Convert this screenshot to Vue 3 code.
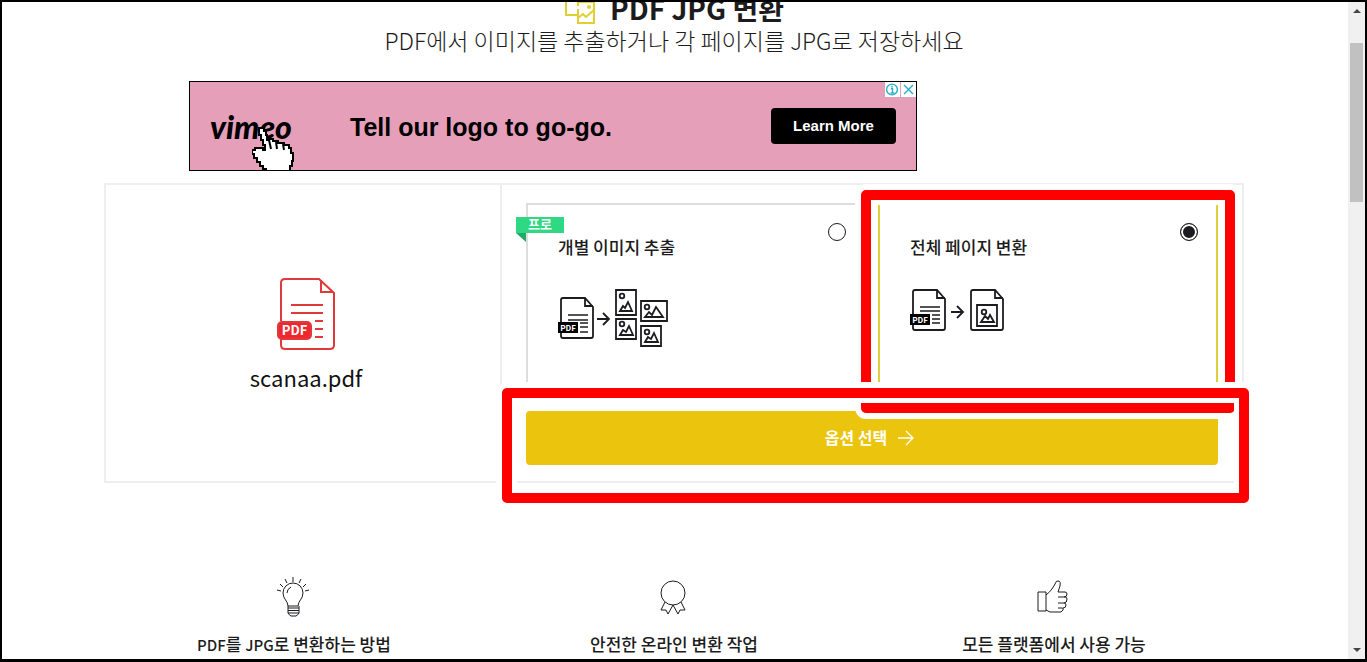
<script setup>
import { ref } from 'vue'

const mode = ref('pages')

const rays = [
  'M16 0v5',
  'M8 2l2 4',
  'M24 2l-2 4',
  'M3 7l3 3',
  'M29 7l-3 3',
  'M0 13l4 1',
  'M32 13l-4 1',
]
</script>

<template>
  <div class="window">
    <main class="page">
      <header class="intro">
        <h1>
          <svg class="title-icon" width="32" height="32" viewBox="0 0 32 32" aria-hidden="true">
            <path d="M14 23H2V3h27v7" />
            <path d="M14 14V10h16v21H14v-8M14 17v6M14 26l5-4 3 3 8-7" />
            <circle cx="25" cy="15" r="2" class="dot" />
          </svg>
          <span>PDF JPG 변환</span>
        </h1>
        <p>PDF에서 이미지를 추출하거나 각 페이지를 JPG로 저장하세요</p>
      </header>

      <div class="content">
        <aside class="ad">
          <div class="brand">vimeo</div>
          <svg class="hand" width="44" height="44" viewBox="0 0 44 44" aria-hidden="true">
            <path
              d="M7 2h5v3h2v4h1v5h2v-1h4v2h5v2h6v2h5v3h2v5h2v8h-1v5h-2v6H14v-3h-3v-3H8v-4H5v-4H2v-4H0v-4h3v-2h8v2h2v-5h-2v-5H9V9H7z"
            />
            <path class="hand-line" d="M17 14l2 9M24 16l1 7M31 18l1 6" />
          </svg>
          <strong class="slogan">Tell our logo to go-go.</strong>
          <a class="learn" href="#">Learn More</a>
          <div class="ad-controls">
            <button type="button" aria-label="Ad information">
              <svg width="15" height="15" viewBox="0 0 15 15">
                <circle cx="7" cy="7.5" r="5.4" />
                <path d="M6 6.5h1.500V11M5.500 11h4M7 3.700v1.500" />
              </svg>
            </button>
            <button type="button" aria-label="Close ad">
              <svg width="15" height="15" viewBox="0 0 15 15">
                <path d="M3 3l9 9M12 3l-9 9" />
              </svg>
            </button>
          </div>
        </aside>

        <section class="tool">
          <div class="file">
            <svg width="60" height="74" viewBox="0 0 60 74" aria-hidden="true" class="pdf-icon">
              <path d="M5 44V6q0-4 4-4h34l15 14v52q0 4-4 4H9q-4 0-4-4v-8" />
              <path d="M45 3v12h12" />
              <path d="M15 28h32M15 36h32M39 44h8M39 52h8M39 60h8" />
              <rect x="2" y="45" width="33" height="17" rx="4" />
              <text x="18.500" y="58" text-anchor="middle">PDF</text>
            </svg>
            <span>scanaa.pdf</span>
          </div>

          <form class="options" @submit.prevent>
            <div class="cards">
              <label class="card" :class="{ selected: mode === 'images' }">
                <span class="ribbon">프로</span>
                <span class="card-title">개별 이미지 추출</span>
                <input v-model="mode" type="radio" name="mode" value="images" />
                <svg class="art" width="112" height="60" viewBox="0 0 112 60" aria-hidden="true">
                  <path d="M3 33V11q0-2 2-2h22l8 9v29q0 2-2 2H5q-2 0-2-2v-4M27 9v8H35" />
                  <path d="M10 26h20M10 31h20M22 34h8M22 38h8M22 43h8" class="thin" />
                  <rect x="0" y="33" width="20" height="11" class="fill" />
                  <text x="10" y="42" text-anchor="middle">PDF</text>
                  <path d="M39 30h12M45 24l6 6-6 6" />
                  <path d="M58 1h20v25H58zM83 12h26v20H83zM58 30h20v20H58zM83 37h20v20H83z" />
                  <circle cx="64" cy="7" r="2.300" /><circle cx="89" cy="18" r="2.300" />
                  <circle cx="64" cy="35" r="2.300" /><circle cx="89" cy="43" r="2.300" />
                  <path d="M62 22l3-5 2 2 3-6 4 9zM87 28l4-5 3 3 4-8 7 10zM62 46l3-5 3 2 3-6 4 9zM87 53l3-5 3 2 3-6 4 9z" />
                </svg>
              </label>

              <label class="card" :class="{ selected: mode === 'pages' }">
                <span class="card-title">전체 페이지 변환</span>
                <input v-model="mode" type="radio" name="mode" value="pages" />
                <svg class="art" width="112" height="60" viewBox="0 0 112 60" aria-hidden="true">
                  <path d="M3 25V3q0-2 2-2h22l8 9v29q0 2-2 2H5q-2 0-2-2v-4M27 1v8H35" />
                  <path d="M10 18h20M10 22h20M22 26h8M22 30h8M22 34h8" class="thin" />
                  <rect x="0" y="25" width="20" height="11" class="fill" />
                  <text x="10" y="34" text-anchor="middle">PDF</text>
                  <path d="M41 23h12M47 17l6 6-6 6" />
                  <path d="M63 1h22l8 9v29q0 2-2 2H63q-2 0-2-2V3q0-2 2-2M85 1v8h8" />
                  <path d="M67 16h20v21H67z" />
                  <circle cx="74" cy="23" r="2.300" />
                  <path d="M71 33l4-6 3 3 2-4 4 7z" />
                </svg>
              </label>
            </div>

            <button class="submit" type="submit">
              <span>옵션 선택</span>
              <svg width="18" height="16" viewBox="0 0 18 16" aria-hidden="true">
                <path d="M1 8h15M9 1l7 7-7 7" />
              </svg>
            </button>
          </form>

          <div class="mark mark-card"></div>
          <div class="mark mark-submit"></div>
        </section>

        <section class="features">
          <article>
            <svg width="34" height="40" viewBox="0 0 34 40" aria-hidden="true">
              <path v-for="ray in rays" :key="ray" :d="ray" />
              <path d="M11 29c0-5-5-7-5-13a10 10 0 0 1 20 0c0 6-5 8-5 13z" />
              <path d="M10 16q0-4 4-6M11 31h11M11 33.500h11M11 36h11v-7M11 29v7q1 2 3 3h5q2-1 3-3" />
            </svg>
            <h2><span class="latin">PDF</span>를 <span class="latin">JPG</span>로 변환하는 방법</h2>
          </article>
          <article>
            <svg width="34" height="40" viewBox="0 0 34 40" aria-hidden="true">
              <circle cx="16" cy="16" r="12" />
              <path d="M8 25L4 33l5 0 2 4 5-9 5 9 2-4 5 0-4-8" />
            </svg>
            <h2>안전한 온라인 변환 작업</h2>
          </article>
          <article>
            <svg width="34" height="40" viewBox="0 0 34 40" aria-hidden="true">
              <path d="M1 15h8v19H1zM9 18c4-3 7-7 9-11q1-4 4-3 2 1 1 5l-2 6h7q2 0 2 2 0 3-3 3M21 20h7q2 0 2 2 0 4-3 4M21 26h6q2 0 2 2 0 3-3 3M21 31h4q2 0 1 2l-2 2H13l-4-2" />
            </svg>
            <h2>모든 플랫폼에서 사용 가능</h2>
          </article>
        </section>
      </div>
    </main>

    <div class="scrollbar" aria-hidden="true">
      <span class="arrow up"></span>
      <span class="track"><span class="thumb"></span></span>
      <span class="arrow down"></span>
    </div>
  </div>
</template>

<style>
html,
body {
  margin: 0;
  overflow: hidden;
}
</style>

<style scoped>
* {
  box-sizing: border-box;
}

.window {
  display: flex;
  height: 100vh;
  overflow: hidden;
  border: 2px solid #000;
  border-bottom-width: 3px;
  background: #fff;
  color: #1c1c20;
  font-family: 'Noto Sans CJK KR', 'Noto Sans', sans-serif;
}

svg {
  display: block;
  flex: none;
  fill: none;
  stroke: currentColor;
}

.page {
  flex: 1;
  min-width: 0;
  padding-right: 2px;
  overflow: hidden;
}

.intro {
  text-align: center;
}

h1 {
  display: flex;
  justify-content: center;
  align-items: center;
  gap: 14px;
  height: 40px;
  margin: -14px 0 0;
  font-size: 28px;
  font-weight: 700;
  line-height: 40px;
}

.title-icon {
  stroke: #e0cf32;
  stroke-width: 2;
}

.dot {
  fill: #e0cf32;
  stroke: none;
}

.intro p {
  margin: 0;
  font-size: 23px;
  font-weight: 200;
  line-height: 24px;
}

.content {
  max-width: 1140px;
  margin: 29px auto 0;
}

.ad {
  position: relative;
  display: flex;
  align-items: center;
  max-width: 728px;
  height: 90px;
  margin-left: 85px;
  padding: 0 20px;
  border: 1px solid #000;
  background: #e59fb9;
  color: #000;
}

.brand {
  width: 140px;
  padding-top: 2px;
  font: italic 900 32px/32px Lato, sans-serif;
}

.hand {
  position: absolute;
  left: 62px;
  bottom: 0;
  fill: #fff;
  stroke: #000;
  stroke-width: 2;
}

.hand-line {
  stroke-width: 2;
}

.slogan {
  flex: 1;
  padding-top: 2px;
  font: bold 25px/32px 'Liberation Sans', sans-serif;
  white-space: nowrap;
}

.learn {
  width: 125px;
  border-radius: 4px;
  background: #000;
  color: #fff;
  font: bold 15px/36px 'Liberation Sans', sans-serif;
  text-align: center;
  text-decoration: none;
}

.ad-controls {
  position: absolute;
  top: 0;
  right: 0;
  display: flex;
  gap: 1px;
}

.ad-controls button {
  padding: 0;
  border: 0;
  background: #fff;
  color: #28afc8;
}

.ad-controls svg {
  stroke-width: 1.4;
}

.tool {
  position: relative;
  display: flex;
  min-height: 300px;
  margin-top: 12px;
  border: 2px solid #eee;
}

.file {
  display: flex;
  flex-direction: column;
  align-items: center;
  justify-content: center;
  gap: 10px;
  width: 396px;
  padding: 4px 0 0 6px;
  border-right: 2px solid #eee;
  color: #111;
  font-size: 22px;
  line-height: 32px;
}

.pdf-icon {
  stroke: #e0393c;
  stroke-width: 2;
}

.pdf-icon rect {
  fill: #f0282d;
}

.pdf-icon text {
  fill: #fff;
  stroke: none;
  font-size: 13px;
  font-weight: 700;
}

.options {
  flex: 1;
  padding: 18px 24px 16px 24px;
}

.cards {
  display: grid;
  grid-template-columns: 1fr 1fr;
  gap: 12px;
}

.card {
  position: relative;
  display: grid;
  grid-template-columns: 1fr auto;
  align-content: start;
  height: 196px;
  padding: 18px 18px 0 30px;
  border: 2px solid #ddd;
}

.card.selected {
  border-color: #e0cf3c;
}

.card-title {
  padding-top: 10px;
  font-size: 17px;
  font-weight: 500;
  line-height: 28px;
}

.card input {
  width: 18px;
  height: 18px;
  margin: 0;
  appearance: none;
  border: 1px solid #1c1c20;
  border-radius: 50%;
  background: #fff;
}

.card input:checked {
  background: #1c1c20;
  box-shadow: inset 0 0 0 2px #fff;
}

.art {
  grid-column: 1 / -1;
  margin-top: 28px;
  stroke-width: 1.8;
}

.thin {
  stroke-width: 1.5;
}

.fill {
  fill: #000;
  stroke: none;
}

.art text {
  fill: #fff;
  stroke: none;
  font-size: 8px;
  font-weight: 700;
}

.ribbon {
  position: absolute;
  top: 12px;
  left: -12px;
  width: 48px;
  height: 16px;
  background: #2fd882;
  color: #fff;
  font-size: 13px;
  font-weight: 700;
  line-height: 14px;
  text-align: center;
}

.ribbon::after {
  content: '';
  position: absolute;
  top: 16px;
  left: 0;
  border-top: 9px solid #25a866;
  border-left: 10px solid transparent;
}

.submit {
  display: flex;
  align-items: center;
  justify-content: center;
  gap: 10px;
  width: 100%;
  height: 54px;
  margin-top: 12px;
  padding: 0 4px 2px 0;
  border: 0;
  border-radius: 4px;
  background: #eac40d;
  color: #fff;
  font: 700 16px/24px 'Noto Sans CJK KR', sans-serif;
}

.submit svg {
  margin-top: 2px;
  stroke-width: 1.3;
}

.mark {
  position: absolute;
  border: 10px solid #f00;
  border-radius: 5px;
  box-shadow: 0 0 0 6px #fff, inset 0 0 0 5px #fff;
  pointer-events: none;
}

.mark-card {
  top: 5px;
  right: 7px;
  width: 374px;
  height: 223px;
}

.mark-submit {
  right: -7px;
  bottom: -22px;
  width: 747px;
  height: 115px;
}

.features {
  display: grid;
  grid-template-columns: repeat(3, 1fr);
  padding-top: 94px;
}

.features article {
  display: flex;
  flex-direction: column;
  align-items: center;
  gap: 15px;
}

.features h2 {
  margin: 0;
  font-size: 17px;
  font-weight: 500;
  line-height: 24px;
}

.features .latin {
  font-size: 15px;
}

.scrollbar {
  display: flex;
  flex-direction: column;
  align-items: center;
  width: 17px;
  background: #f0f0f0;
}

.track {
  flex: 1;
  width: 13px;
  padding-top: 23px;
}

.thumb {
  display: block;
  height: 159px;
  background: #c1c1c1;
}

.arrow {
  margin: 7px 0;
  border: 4px solid transparent;
}

.up {
  border-top: 0;
  border-bottom-color: #444;
}

.down {
  border-bottom: 0;
  border-top-color: #444;
}
</style>
